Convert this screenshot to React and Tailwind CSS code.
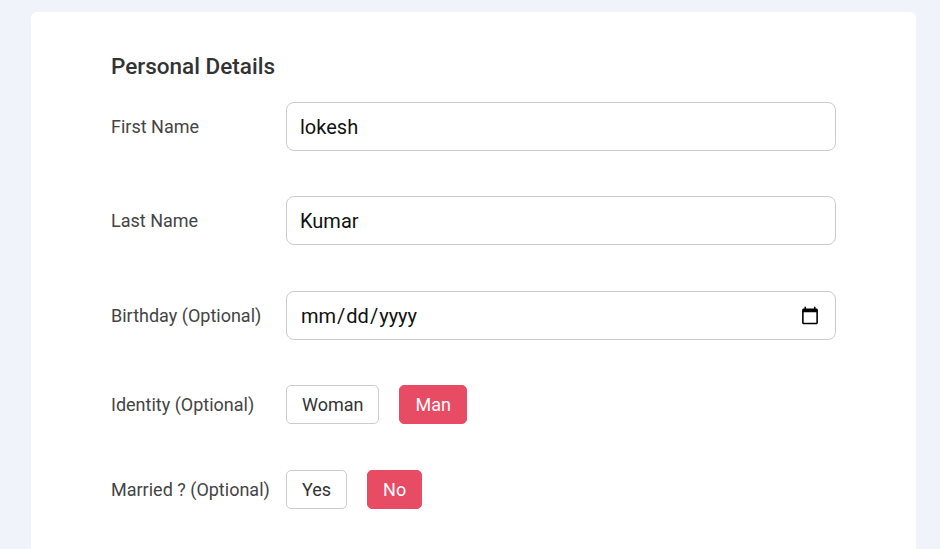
import { useState } from 'react'

function Row({ label, children, className = '' }) {
  return (
    <div className={`flex items-center ${className}`}>
      <label className="w-[175px] shrink-0 text-[18px] text-[#444]">{label}</label>
      {children}
    </div>
  )
}

function Choice({ options, value, onChange }) {
  return (
    <div className="flex gap-5">
      {options.map((opt) => (
        <button
          key={opt}
          onClick={() => onChange(opt)}
          className={`h-[39px] px-[15px] rounded-[5px] border text-[18px] ${
            value === opt
              ? 'bg-[#e84b64] border-[#e84b64] text-white'
              : 'bg-white border-[#ccc] text-[#333]'
          }`}
        >
          {opt}
        </button>
      ))}
    </div>
  )
}

export default function App() {
  const [first, setFirst] = useState('lokesh')
  const [last, setLast] = useState('Kumar')
  const [birthday, setBirthday] = useState('')
  const [identity, setIdentity] = useState('Man')
  const [married, setMarried] = useState('No')

  const inputClass =
    'w-[550px] h-[49px] px-[13px] rounded-[8px] border border-[#ccc] text-[20px] text-[#111] outline-none bg-white'

  return (
    <div className="h-[549px] overflow-hidden bg-[#f0f4fa] px-[31px] pt-3 font-['Roboto',sans-serif]">
      <div className="w-[885px] h-[600px] bg-white rounded-[6px] pl-[80px] pt-[40px]">
        <h2 className="text-[22.5px] font-medium text-[#333] leading-[28px] mb-[22px]">Personal Details</h2>
        <Row label="First Name">
          <input className={inputClass} value={first} onChange={(e) => setFirst(e.target.value)} />
        </Row>
        <Row label="Last Name" className="mt-[45px]">
          <input className={inputClass} value={last} onChange={(e) => setLast(e.target.value)} />
        </Row>
        <Row label="Birthday (Optional)" className="mt-[46px]">
          <input type="date" className={inputClass} value={birthday} onChange={(e) => setBirthday(e.target.value)} />
        </Row>
        <Row label="Identity (Optional)" className="mt-[45px]">
          <Choice options={['Woman', 'Man']} value={identity} onChange={setIdentity} />
        </Row>
        <Row label="Married ? (Optional)" className="mt-[46px]">
          <Choice options={['Yes', 'No']} value={married} onChange={setMarried} />
        </Row>
      </div>
    </div>
  )
}
